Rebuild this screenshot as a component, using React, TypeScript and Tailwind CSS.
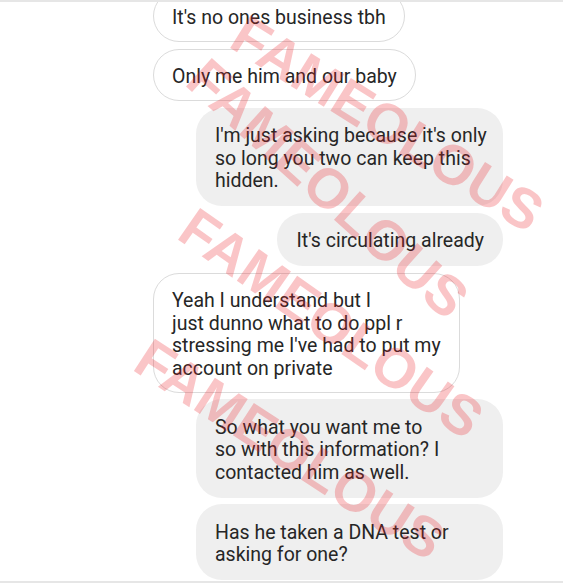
import type { ReactNode } from 'react'

type Msg = {
  id: number
  mine: boolean
  lines: string[]
}

const messages: Msg[] = [
  { id: 1, mine: false, lines: ["It's no ones business tbh"] },
  { id: 2, mine: false, lines: ['Only me him and our baby'] },
  {
    id: 3,
    mine: true,
    lines: ["I'm just asking because it's only", 'so long you two can keep this', 'hidden.'],
  },
  { id: 4, mine: true, lines: ["It's circulating already"] },
  {
    id: 5,
    mine: false,
    lines: [
      'Yeah I understand but I',
      'just dunno what to do ppl r',
      "stressing me I've had to put my",
      'account on private',
    ],
  },
  {
    id: 6,
    mine: true,
    lines: ['So what you want me to', 'so with this information? I', 'contacted him as well.'],
  },
  { id: 7, mine: true, lines: ['Has he taken a DNA test or', 'asking for one?'] },
]

function Bubble({ mine, wide, children }: { mine: boolean; wide: boolean; children: ReactNode }) {
  return (
    <div className={`flex ${mine ? 'justify-end' : 'justify-start'}`}>
      <div
        className={`rounded-[26px] text-[19.5px] leading-[22.5px] text-[#262626] whitespace-nowrap ${
          wide ? 'w-[307px]' : ''
        } ${
          mine
            ? 'bg-[#efefef] px-[19px] pt-[17.5px] pb-[13.5px]'
            : 'bg-white border border-[#dbdbdb] px-[18px] pt-[16.5px] pb-[11.5px]'
        }`}
      >
        {children}
      </div>
    </div>
  )
}

export default function App() {
  return (
    <div
      className="relative h-[583px] w-[563px] overflow-hidden bg-white border-t-2 border-b-2 border-[#e6e6e6]"
      style={{ fontFamily: 'Roboto, "Liberation Sans", sans-serif' }}
    >
      {/* Thread */}
      <div className="flex flex-col gap-[6.5px] pl-[153px] pr-[60px] -mt-[12.5px]">
        {messages.map((m) => (
          <Bubble key={m.id} mine={m.mine} wide={m.lines.length > 1}>
            {m.lines.map((l, i) => (
              <div key={i}>{l}</div>
            ))}
          </Bubble>
        ))}
      </div>

      {/* Watermark */}
      <div
        className="pointer-events-none absolute inset-0 text-[56px] font-bold leading-none text-[rgba(235,30,40,0.26)]"
        style={{ fontFamily: '"Liberation Sans", Arial, sans-serif' }}
      >
        <span className="absolute left-[237px] top-[0px] origin-left rotate-[32deg] whitespace-nowrap">FAMEOLOUS</span>
        <span className="absolute left-[196px] top-[40px] origin-left rotate-[42deg] whitespace-nowrap">FAMEOLOUS</span>
        <span className="absolute left-[186px] top-[192px] origin-left rotate-[35deg] whitespace-nowrap">FAMEOLOUS</span>
        <span className="absolute left-[141px] top-[323px] origin-left rotate-[33deg] whitespace-nowrap">FAMEOLOUS</span>
      </div>
    </div>
  )
}
